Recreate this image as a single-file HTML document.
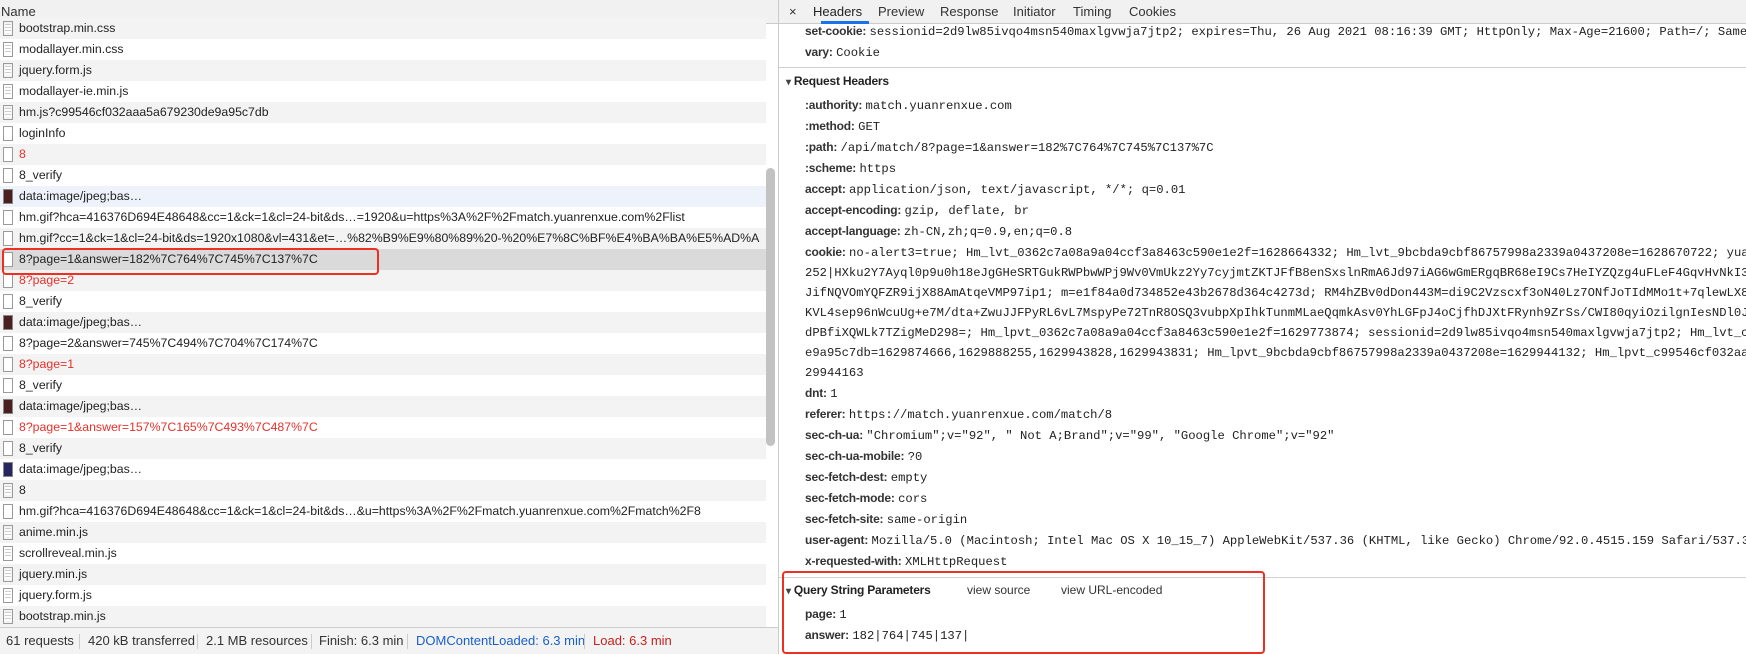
<!DOCTYPE html>
<html><head><meta charset="utf-8">
<style>
*{box-sizing:border-box;margin:0;padding:0}
body{width:1746px;height:654px;overflow:hidden;background:#fff;font-family:"Liberation Sans",sans-serif;position:relative;color:#222}
#left{position:absolute;left:0;top:0;width:778px;height:654px;overflow:hidden}
#nh{position:absolute;left:0;top:0;width:778px;height:24px;background:#f1f1f1;border-bottom:1px solid #cbcbcb;font-size:13px;line-height:23px;padding-left:1px;color:#333}
.row{position:absolute;left:0;width:766px;height:21px;font-size:12.3px;line-height:21px;white-space:nowrap;overflow:hidden;padding-left:19px;color:#222}
.g{background:#f3f3f3}.w{background:#fff}.sel{background:#dadada}.hov{background:#eef3fb}
.red{color:#e8302a}
.ic{position:absolute;left:3px;top:3px;width:10px;height:15px;border:1px solid #9a9a9a;background:#fff}
.ic.doc{background:repeating-linear-gradient(#fff 0 2px,#ccc 2px 3px);background-clip:content-box;padding:2px 1px}
.ic.img{background:#4a1f1f;border-color:#888}
.ic.img2{background:#262660;border-color:#888}
#sb{position:absolute;left:766px;top:168px;width:9px;height:278px;border-radius:5px;background:#c2c2c2}
#status{position:absolute;left:0;top:627px;width:778px;height:27px;background:#f3f3f3;border-top:1px solid #cbcbcb;font-size:13px;line-height:26px;color:#333}
#status span{position:absolute;top:0}
#status i{position:absolute;top:6px;width:1px;height:15px;background:#ccc}
#right{position:absolute;left:778px;top:0;width:968px;height:654px;border-left:1px solid #cbcbcb;overflow:hidden}
#tabs{position:absolute;left:0;top:0;width:968px;height:24px;background:#f1f1f1;border-bottom:1px solid #cbcbcb;font-size:13px;color:#333}
#tabs span{position:absolute;top:4px}
#ul{position:absolute;left:42px;top:21px;width:48px;height:3px;background:#1a73e8}
.l{position:absolute;left:26px;white-space:nowrap;font-size:12.2px;line-height:20px;height:20px}
.l b{font-family:"Liberation Sans",sans-serif;font-weight:bold;font-size:12px;color:#333;letter-spacing:-0.2px}
.l tt{font-family:"Liberation Mono",monospace;font-size:12.2px;color:#222}
.sec{position:absolute;left:7px;font-size:12px;font-weight:bold;color:#222;line-height:20px;white-space:nowrap;letter-spacing:-0.2px}
.sec:before{content:"▾";font-size:10px;margin-right:3px;color:#444}
.hr{position:absolute;left:0;width:968px;height:1px;background:#d0d0d0}
.box{position:absolute;border:2px solid #ef2f22;border-radius:4px}
</style></head><body>
<div id="left">
<div id="nh">Name</div>
<div class="row g" style="top:18px"><div class="ic doc"></div>bootstrap.min.css</div>
<div class="row w" style="top:39px"><div class="ic doc"></div>modallayer.min.css</div>
<div class="row g" style="top:60px"><div class="ic doc"></div>jquery.form.js</div>
<div class="row w" style="top:81px"><div class="ic doc"></div>modallayer-ie.min.js</div>
<div class="row g" style="top:102px"><div class="ic doc"></div>hm.js?c99546cf032aaa5a679230de9a95c7db</div>
<div class="row w" style="top:123px"><div class="ic"></div>loginInfo</div>
<div class="row g red" style="top:144px"><div class="ic"></div>8</div>
<div class="row w" style="top:165px"><div class="ic"></div>8_verify</div>
<div class="row hov" style="top:186px"><div class="ic img"></div>data:image/jpeg;bas…</div>
<div class="row w" style="top:207px"><div class="ic"></div>hm.gif?hca=416376D694E48648&amp;cc=1&amp;ck=1&amp;cl=24-bit&amp;ds…=1920&amp;u=https%3A%2F%2Fmatch.yuanrenxue.com%2Flist</div>
<div class="row g" style="top:228px"><div class="ic"></div>hm.gif?cc=1&amp;ck=1&amp;cl=24-bit&amp;ds=1920x1080&amp;vl=431&amp;et=…%82%B9%E9%80%89%20-%20%E7%8C%BF%E4%BA%BA%E5%AD%A</div>
<div class="row sel" style="top:249px"><div class="ic"></div>8?page=1&amp;answer=182%7C764%7C745%7C137%7C</div>
<div class="row g red" style="top:270px"><div class="ic"></div>8?page=2</div>
<div class="row w" style="top:291px"><div class="ic"></div>8_verify</div>
<div class="row g" style="top:312px"><div class="ic img"></div>data:image/jpeg;bas…</div>
<div class="row w" style="top:333px"><div class="ic"></div>8?page=2&amp;answer=745%7C494%7C704%7C174%7C</div>
<div class="row g red" style="top:354px"><div class="ic"></div>8?page=1</div>
<div class="row w" style="top:375px"><div class="ic"></div>8_verify</div>
<div class="row g" style="top:396px"><div class="ic img"></div>data:image/jpeg;bas…</div>
<div class="row w red" style="top:417px"><div class="ic"></div>8?page=1&amp;answer=157%7C165%7C493%7C487%7C</div>
<div class="row g" style="top:438px"><div class="ic"></div>8_verify</div>
<div class="row w" style="top:459px"><div class="ic img2"></div>data:image/jpeg;bas…</div>
<div class="row g" style="top:480px"><div class="ic doc"></div>8</div>
<div class="row w" style="top:501px"><div class="ic"></div>hm.gif?hca=416376D694E48648&amp;cc=1&amp;ck=1&amp;cl=24-bit&amp;ds…&amp;u=https%3A%2F%2Fmatch.yuanrenxue.com%2Fmatch%2F8</div>
<div class="row g" style="top:522px"><div class="ic doc"></div>anime.min.js</div>
<div class="row w" style="top:543px"><div class="ic doc"></div>scrollreveal.min.js</div>
<div class="row g" style="top:564px"><div class="ic doc"></div>jquery.min.js</div>
<div class="row w" style="top:585px"><div class="ic doc"></div>jquery.form.js</div>
<div class="row g" style="top:606px"><div class="ic doc"></div>bootstrap.min.js</div>
<div id="sb"></div>
<div class="box" style="left:2px;top:248px;width:377px;height:27px"></div>
<div id="status">
<span style="left:6px">61 requests</span><i style="left:79px"></i>
<span style="left:88px">420 kB transferred</span><i style="left:197px"></i>
<span style="left:206px">2.1 MB resources</span><i style="left:311px"></i>
<span style="left:319px">Finish: 6.3 min</span><i style="left:407px"></i>
<span style="left:416px;color:#1a5fc9">DOMContentLoaded: 6.3 min</span><i style="left:584px"></i>
<span style="left:593px;color:#c5221f">Load: 6.3 min</span>
</div>
</div>
<div id="right">
<div id="tabs">
<span style="left:10px">×</span>
<span style="left:34px;color:#222">Headers</span>
<span style="left:99px">Preview</span>
<span style="left:161px">Response</span>
<span style="left:234px">Initiator</span>
<span style="left:294px">Timing</span>
<span style="left:350px">Cookies</span>
<div id="ul"></div>
</div>
<div class="l" style="top:21px"><b>set-cookie:</b> <tt>sessionid=2d9lw85ivqo4msn540maxlgvwja7jtp2; expires=Thu, 26 Aug 2021 08:16:39 GMT; HttpOnly; Max-Age=21600; Path=/; SameSite=Lax</tt></div>
<div class="l" style="top:42px"><b>vary:</b> <tt>Cookie</tt></div>
<div class="hr" style="top:67px"></div>
<div class="sec" style="top:71px">Request Headers</div>
<div class="l" style="top:95px"><b>:authority:</b> <tt>match.yuanrenxue.com</tt></div>
<div class="l" style="top:116px"><b>:method:</b> <tt>GET</tt></div>
<div class="l" style="top:137px"><b>:path:</b> <tt>/api/match/8?page=1&amp;answer=182%7C764%7C745%7C137%7C</tt></div>
<div class="l" style="top:158px"><b>:scheme:</b> <tt>https</tt></div>
<div class="l" style="top:179px"><b>accept:</b> <tt>application/json, text/javascript, */*; q=0.01</tt></div>
<div class="l" style="top:200px"><b>accept-encoding:</b> <tt>gzip, deflate, br</tt></div>
<div class="l" style="top:221px"><b>accept-language:</b> <tt>zh-CN,zh;q=0.9,en;q=0.8</tt></div>
<div class="l" style="top:242px"><b>cookie:</b> <tt>no-alert3=true; Hm_lvt_0362c7a08a9a04ccf3a8463c590e1e2f=1628664332; Hm_lvt_9bcbda9cbf86757998a2339a0437208e=1628670722; yuanrenxue_cookie=16</tt></div>
<div class="l" style="top:262px"><tt>252|HXku2Y7Ayql0p9u0h18eJgGHeSRTGukRWPbwWPj9Wv0VmUkz2Yy7cyjmtZKTJFfB8enSxslnRmA6Jd97iAG6wGmERgqBR68eI9Cs7HeIYZQzg4uFLeF4GqvHvNkI36B</tt></div>
<div class="l" style="top:282px"><tt>JifNQVOmYQFZR9ijX88AmAtqeVMP97ip1; m=e1f84a0d734852e43b2678d364c4273d; RM4hZBv0dDon443M=di9C2Vzscxf3oN40Lz7ONfJoTIdMMo1t+7qlewLX8q9</tt></div>
<div class="l" style="top:302px"><tt>KVL4sep96nWcuUg+e7M/dta+ZwuJJFPyRL6vL7MspyPe72TnR8OSQ3vubpXpIhkTunmMLaeQqmkAsv0YhLGFpJ4oCjfhDJXtFRynh9ZrSs/CWI80qyiOzilgnIesNDl0JQD</tt></div>
<div class="l" style="top:322px"><tt>dPBfiXQWLk7TZigMeD298=; Hm_lpvt_0362c7a08a9a04ccf3a8463c590e1e2f=1629773874; sessionid=2d9lw85ivqo4msn540maxlgvwja7jtp2; Hm_lvt_c99546cf03</tt></div>
<div class="l" style="top:342px"><tt>e9a95c7db=1629874666,1629888255,1629943828,1629943831; Hm_lpvt_9bcbda9cbf86757998a2339a0437208e=1629944132; Hm_lpvt_c99546cf032aaa5a6792</tt></div>
<div class="l" style="top:362px"><tt>29944163</tt></div>
<div class="l" style="top:383px"><b>dnt:</b> <tt>1</tt></div>
<div class="l" style="top:404px"><b>referer:</b> <tt>https://match.yuanrenxue.com/match/8</tt></div>
<div class="l" style="top:425px"><b>sec-ch-ua:</b> <tt>"Chromium";v="92", " Not A;Brand";v="99", "Google Chrome";v="92"</tt></div>
<div class="l" style="top:446px"><b>sec-ch-ua-mobile:</b> <tt>?0</tt></div>
<div class="l" style="top:467px"><b>sec-fetch-dest:</b> <tt>empty</tt></div>
<div class="l" style="top:488px"><b>sec-fetch-mode:</b> <tt>cors</tt></div>
<div class="l" style="top:509px"><b>sec-fetch-site:</b> <tt>same-origin</tt></div>
<div class="l" style="top:530px"><b>user-agent:</b> <tt>Mozilla/5.0 (Macintosh; Intel Mac OS X 10_15_7) AppleWebKit/537.36 (KHTML, like Gecko) Chrome/92.0.4515.159 Safari/537.36</tt></div>
<div class="l" style="top:551px"><b>x-requested-with:</b> <tt>XMLHttpRequest</tt></div>
<div class="hr" style="top:577px"></div>
<div class="sec" style="top:580px">Query String Parameters</div>
<div style="position:absolute;left:188px;top:580px;font-size:12px;line-height:20px;color:#333">view source</div>
<div style="position:absolute;left:282px;top:580px;font-size:12px;line-height:20px;color:#333">view URL-encoded</div>
<div class="l" style="top:604px"><b>page:</b> <tt>1</tt></div>
<div class="l" style="top:625px"><b>answer:</b> <tt>182|764|745|137|</tt></div>
<div class="box" style="left:3px;top:571px;width:483px;height:83px"></div>
</div>
</body></html>
